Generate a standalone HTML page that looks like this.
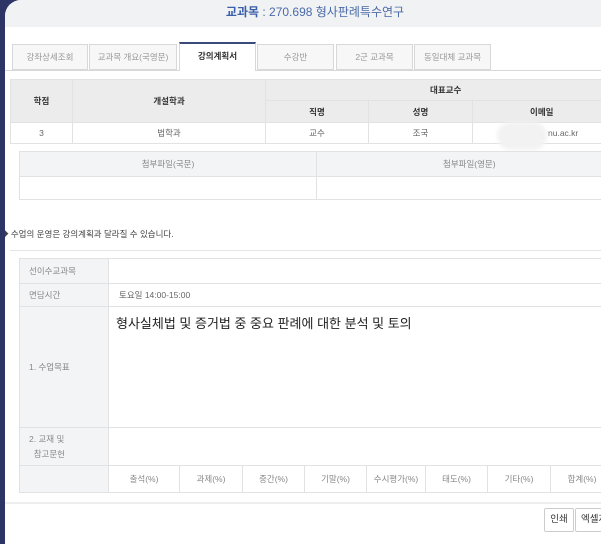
<!DOCTYPE html>
<html><head><meta charset="utf-8"><style>
*{margin:0;padding:0;box-sizing:border-box}
body{width:601px;height:544px;overflow:hidden;background:#2d3566;font-family:"Liberation Sans","Noto Sans CJK KR",sans-serif;color:#555;position:relative}
.page{position:absolute;left:5px;top:0;width:600px;height:544px;background:#fff;border-top-left-radius:16px;overflow:hidden}
.title{height:27px;background:#f1f2f4;text-align:center;font-size:12px;line-height:25px;color:#4a6aa8;padding-left:20px}
.title b{color:#3b5fa8}
.abs{position:absolute}
.tab{position:absolute;top:44px;height:26px;border:1px solid #d8d8d8;background:#f7f7f7;font-size:8.5px;color:#999;text-align:center;line-height:24px}
.tab.on{top:42px;height:29px;background:#fff;border-top:2px solid #3a4a7a;border-bottom:none;color:#333;font-weight:bold}
table{border-collapse:collapse;position:absolute;font-size:8.5px;text-align:center;table-layout:fixed}
td{border:1px solid #e2e2e2}
.h{background:#ececec;color:#333;font-weight:bold}
.l{background:#f3f4f6;color:#888;text-align:left;padding-left:9px}
</style></head><body><div class="page">
<div class="title"><b>교과목</b> : 270.698 형사판례특수연구</div>
<div class="abs" style="left:0;top:70px;width:600px;border-top:1px solid #d8d8d8"></div>
<div class="tab" style="left:7px;width:76px">강좌상세조회</div>
<div class="tab" style="left:84px;width:88px">교과목 개요(국영문)</div>
<div class="tab on" style="left:174px;width:77px">강의계획서</div>
<div class="tab" style="left:252px;width:77px">수강반</div>
<div class="tab" style="left:331px;width:77px">2군 교과목</div>
<div class="tab" style="left:409px;width:77px">동일대체 교과목</div>
<table style="left:5px;top:79px;width:675px">
<colgroup><col style="width:62px"><col style="width:193px"><col style="width:103px"><col style="width:104px"><col></colgroup>
<tr style="height:21px"><td class="h" rowspan="2">학점</td><td class="h" rowspan="2">개설학과</td><td class="h" colspan="3" style="text-align:left;padding-left:164px">대표교수</td></tr>
<tr style="height:22px"><td class="h">직명</td><td class="h">성명</td><td class="h" style="text-align:left;padding-left:57px">이메일</td></tr>
<tr style="height:21px;color:#666"><td>3</td><td>법학과</td><td>교수</td><td>조국</td><td style="text-align:left;padding-left:75px">nu.ac.kr</td></tr>
</table>
<div class="abs" style="left:492px;top:122px;width:50px;height:28px;border-radius:14px;background:#f2f2f2;filter:blur(2px)"></div>
<table style="left:14px;top:151px;width:680px">
<colgroup><col style="width:297px"><col></colgroup>
<tr style="height:25px;background:#f3f4f6;color:#888"><td>첨부파일(국문)</td><td style="text-align:left;padding-left:126px">첨부파일(영문)</td></tr>
<tr style="height:23px"><td></td><td></td></tr>
</table>
<div class="abs" style="left:-5px;top:228px;font-size:8.5px;color:#444">◆ 수업의 운영은 강의계획과 달라질 수 있습니다.</div>
<div class="abs" style="left:5px;top:250px;width:600px;border-top:1px solid #e4e4e4"></div>
<table style="left:14px;top:258px;width:680px">
<colgroup><col style="width:89px"><col style="width:71px"><col style="width:63px"><col style="width:62px"><col style="width:62px"><col style="width:59px"><col style="width:62px"><col style="width:63px"><col style="width:63px"><col></colgroup>
<tr style="height:25px"><td class="l">선이수교과목</td><td colspan="9"></td></tr>
<tr style="height:23px"><td class="l">면담시간</td><td colspan="9" style="text-align:left;padding-left:10px;color:#666">토요일 14:00-15:00</td></tr>
<tr style="height:121px"><td class="l">1. 수업목표</td><td colspan="9" style="text-align:left;vertical-align:top;padding:6px 0 0 7px;font-size:13px;color:#222">형사실체법 및 증거법 중 중요 판례에 대한 분석 및 토의</td></tr>
<tr style="height:38px"><td class="l" style="line-height:15px">2. 교재 및<br>&nbsp;&nbsp;참고문헌</td><td colspan="9"></td></tr>
<tr style="height:27px;color:#888"><td class="l"></td><td>출석(%)</td><td>과제(%)</td><td>중간(%)</td><td>기말(%)</td><td>수시평가(%)</td><td>태도(%)</td><td>기타(%)</td><td>합계(%)</td><td></td></tr>
</table>
<div class="abs" style="left:0;top:502px;width:600px;border-top:2px solid #eee"></div>
<div class="abs" style="left:539px;top:508px;width:30px;height:24px;border:1px solid #ccc;border-radius:2px;font-size:9.5px;line-height:22px;text-align:center;color:#333">인쇄</div>
<div class="abs" style="left:570px;top:508px;width:45px;height:24px;border:1px solid #ccc;border-radius:2px;font-size:9.5px;line-height:22px;padding-left:5px;color:#333;white-space:nowrap;overflow:hidden">엑셀저장</div>
</div></body></html>
